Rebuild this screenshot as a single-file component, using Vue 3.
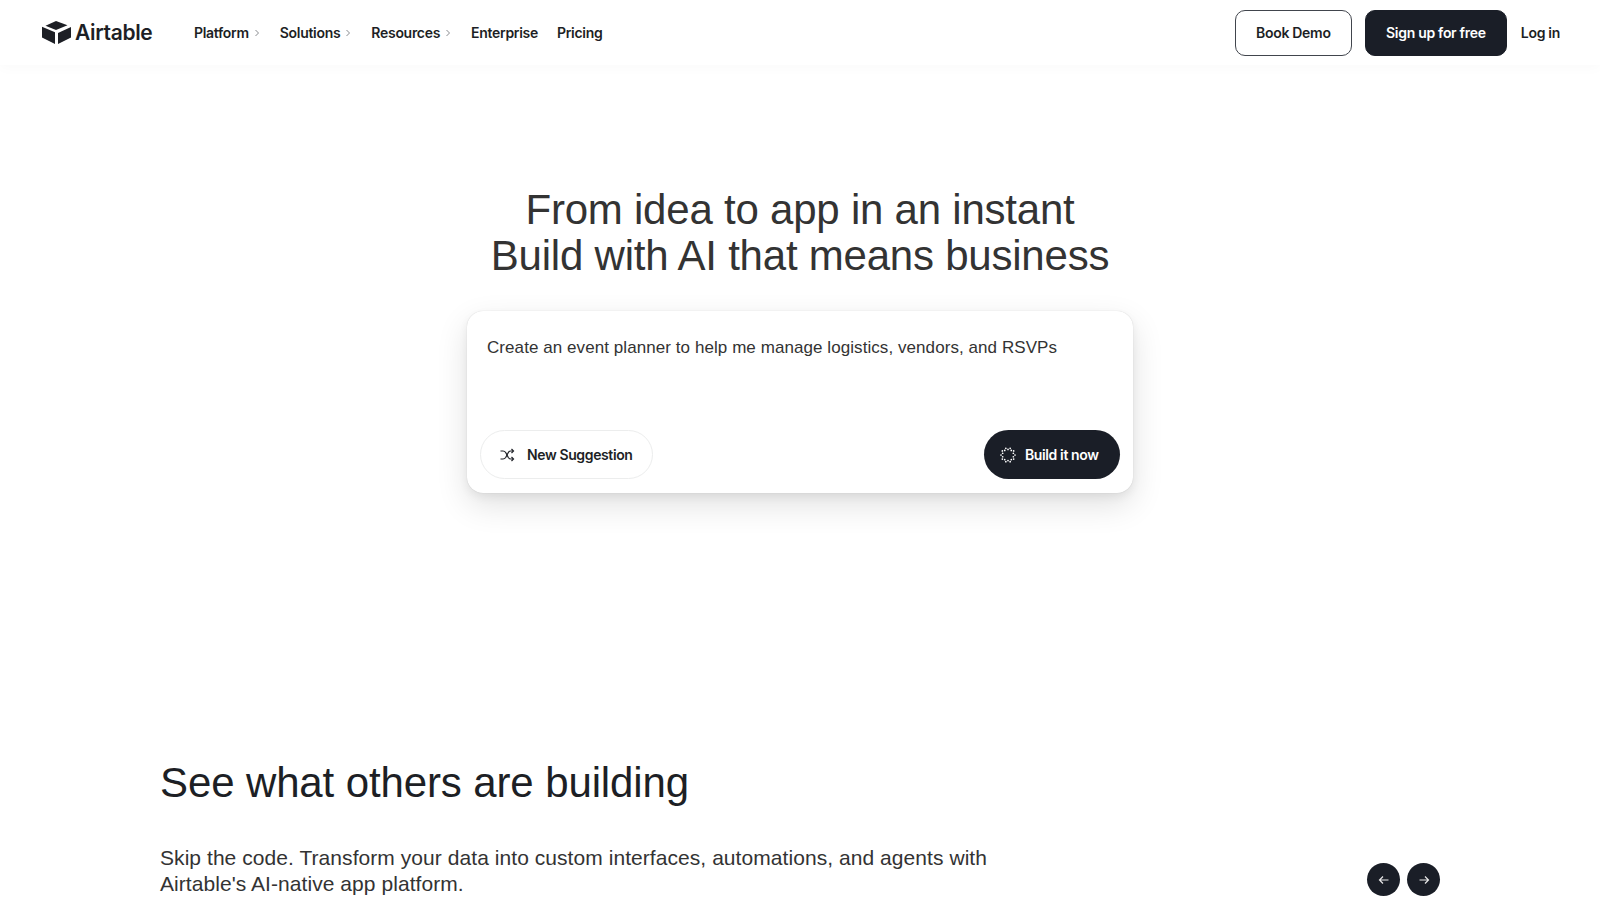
<template>
  <div class="page">
    <header class="topbar">
      <div class="topbar-left">
        <a class="logo">
          <svg class="logo-mark" viewBox="0 0 29 23" width="29" height="23">
            <path d="M14 0 25.500 4.300 14 9 3.500 4.700Z" />
            <path d="M0 5.800 13 11.300v11.700L0 16.500Z" />
            <path d="M16 12 29 6v10.500L16 23Z" />
          </svg>
          <span class="logo-text">Airtable</span>
        </a>
        <nav class="nav">
          <a v-for="item in navItems" :key="item.label" class="nav-item">
            {{ item.label }}
            <svg v-if="item.arrow" class="chevron" viewBox="0 0 8 10" width="8" height="10">
              <path d="M2.500 2 5.500 5 2.500 8" />
            </svg>
          </a>
        </nav>
      </div>
      <div class="topbar-right">
        <button class="btn btn-outline">Book Demo</button>
        <button class="btn btn-dark">Sign up for free</button>
        <a class="login">Log in</a>
      </div>
    </header>

    <section class="hero">
      <h1 class="hero-title">From idea to app in an instant<br />Build with AI that means business</h1>
      <div class="prompt-card">
        <p class="prompt-text">Create an event planner to help me manage logistics, vendors, and RSVPs</p>
        <div class="prompt-actions">
          <button class="pill pill-light">
            <svg class="shuffle" viewBox="0 0 16 16" width="16" height="16">
              <path d="M1.500 4H4c1.200 0 2 .5 2.700 1.500l2.600 5c.6 1 1.500 1.500 2.700 1.500h2" />
              <path d="M1.500 12H4c1.200 0 2-.5 2.700-1.500l2.600-5C9.900 4.500 10.800 4 12 4h2" />
              <path d="M12.500 2 14.500 4 12.500 6M12.500 10l2 2-2 2" />
            </svg>
            New Suggestion
          </button>
          <button class="pill pill-dark">
            <svg class="spark" viewBox="0 0 16 16" width="16" height="16">
              <circle v-for="dot in sparkDots" :key="dot.key" :cx="dot.x" :cy="dot.y" :r="dot.r" />
            </svg>
            Build it now
          </button>
        </div>
      </div>
    </section>

    <section class="showcase">
      <h2 class="showcase-title">See what others are building</h2>
      <div class="showcase-row">
        <p class="showcase-text">Skip the code. Transform your data into custom interfaces, automations, and agents with Airtable's AI-native app platform.</p>
        <div class="arrows">
          <button class="round">
            <svg viewBox="0 0 12 12" width="12" height="12"><path d="M10.500 6h-9M5 2.500 1.500 6 5 9.500" /></svg>
          </button>
          <button class="round">
            <svg viewBox="0 0 12 12" width="12" height="12"><path d="M1.500 6h9M7 2.500 10.500 6 7 9.500" /></svg>
          </button>
        </div>
      </div>
    </section>
  </div>
</template>

<script setup>
const navItems = [
  { label: 'Platform', arrow: true },
  { label: 'Solutions', arrow: true },
  { label: 'Resources', arrow: true },
  { label: 'Enterprise', arrow: false },
  { label: 'Pricing', arrow: false }
]

// ring of small dots for the build icon
const sparkDots = Array.from({ length: 20 }, (_, i) => {
  const a = (i / 20) * Math.PI * 2
  const rad = i % 2 ? 5.6 : 7
  return { key: i, x: 8 + Math.cos(a) * rad, y: 8 + Math.sin(a) * rad, r: 0.85 }
})
</script>

<style scoped>
.page {
  width: 1600px;
  height: 900px;
  overflow: hidden;
  background: #fff;
  color: #1d1f25;
  font-family: "Liberation Sans", Arial, sans-serif;
}

.topbar {
  height: 65px;
  padding: 0 40px 0 42px;
  display: flex;
  align-items: center;
  justify-content: space-between;
  box-shadow: 0 3px 12px rgba(0, 0, 0, 0.025);
}

.topbar-left {
  display: flex;
  align-items: center;
}

.logo {
  display: flex;
  align-items: center;
  gap: 4px;
  width: 152px;
}

.logo-mark {
  fill: #1d1f25;
}

.logo-text {
  font-family: Inter, sans-serif;
  font-size: 21px;
  font-weight: 600;
  letter-spacing: -0.35px;
}

.nav {
  display: flex;
  align-items: center;
  gap: 19px;
}

.nav-item {
  display: flex;
  align-items: center;
  gap: 4px;
  font-family: Inter, sans-serif;
  font-size: 14px;
  font-weight: 600;
  letter-spacing: -0.3px;
}

.chevron {
  fill: none;
  stroke: #8a8c90;
  stroke-width: 1;
}

.topbar-right {
  display: flex;
  align-items: center;
}

.btn {
  height: 46px;
  border-radius: 10px;
  font-family: Inter, sans-serif;
  font-size: 14px;
  font-weight: 600;
  letter-spacing: -0.3px;
  padding: 0;
  white-space: nowrap;
}

.btn-outline {
  width: 117px;
  background: #fff;
  border: 1px solid #41454d;
  color: #1d1f25;
  margin-right: 13px;
}

.btn-dark {
  width: 142px;
  background: #1a1e27;
  border: 1px solid #1a1e27;
  color: #fff;
  margin-right: 14px;
}

.login {
  font-family: Inter, sans-serif;
  font-size: 14px;
  font-weight: 600;
  letter-spacing: -0.3px;
}

.hero {
  display: flex;
  flex-direction: column;
  align-items: center;
  padding-top: 122px;
}

.hero-title {
  margin: 0;
  font-size: 42px;
  font-weight: 400;
  line-height: 46px;
  letter-spacing: -0.22px;
  text-align: center;
  color: #333;
}

.prompt-card {
  width: 666px;
  height: 182px;
  box-sizing: border-box;
  margin-top: 32px;
  padding: 13px 13px 14px;
  border-radius: 16px;
  background: #fff;
  box-shadow: 0 0 1px rgba(0, 0, 0, 0.2), 0 4px 10px rgba(0, 0, 0, 0.06), 0 12px 32px rgba(0, 0, 0, 0.12);
  display: flex;
  flex-direction: column;
  justify-content: space-between;
}

.prompt-text {
  margin: 11px 0 0 7px;
  font-size: 17px;
  line-height: 26px;
  letter-spacing: 0.07px;
  color: #333;
}

.prompt-actions {
  display: flex;
  justify-content: space-between;
}

.pill {
  height: 49px;
  border-radius: 25px;
  font-family: Inter, sans-serif;
  font-size: 14px;
  font-weight: 600;
  letter-spacing: -0.38px;
  display: flex;
  align-items: center;
}

.pill-light {
  width: 173px;
  background: #fff;
  border: 1px solid #eceded;
  color: #1d1f25;
  padding: 0 0 0 18px;
  gap: 12px;
}

.pill-dark {
  width: 136px;
  background: #1a1e27;
  border: none;
  color: #fff;
  padding: 0 0 0 16px;
  gap: 9px;
}

.shuffle {
  fill: none;
  stroke: #1d1f25;
  stroke-width: 1.200;
}

.spark {
  fill: #fff;
}

.showcase {
  padding: 0 160px;
  margin-top: 264px;
}

.showcase-title {
  margin: 0;
  font-size: 42px;
  font-weight: 400;
  line-height: 52px;
  letter-spacing: -0.12px;
  color: #1d1f25;
}

.showcase-row {
  margin-top: 36px;
  display: flex;
  justify-content: space-between;
  align-items: flex-end;
}

.showcase-text {
  margin: 0;
  width: 860px;
  font-size: 21px;
  line-height: 26px;
  letter-spacing: 0.06px;
  color: #333;
}

.arrows {
  display: flex;
  gap: 7px;
  margin-bottom: 1px;
}

.round {
  width: 33px;
  height: 33px;
  padding: 0;
  border: none;
  border-radius: 50%;
  background: #1a1e27;
  display: flex;
  align-items: center;
  justify-content: center;
}

.round svg {
  fill: none;
  stroke: #e8e8e8;
  stroke-width: 1.200;
}
</style>
